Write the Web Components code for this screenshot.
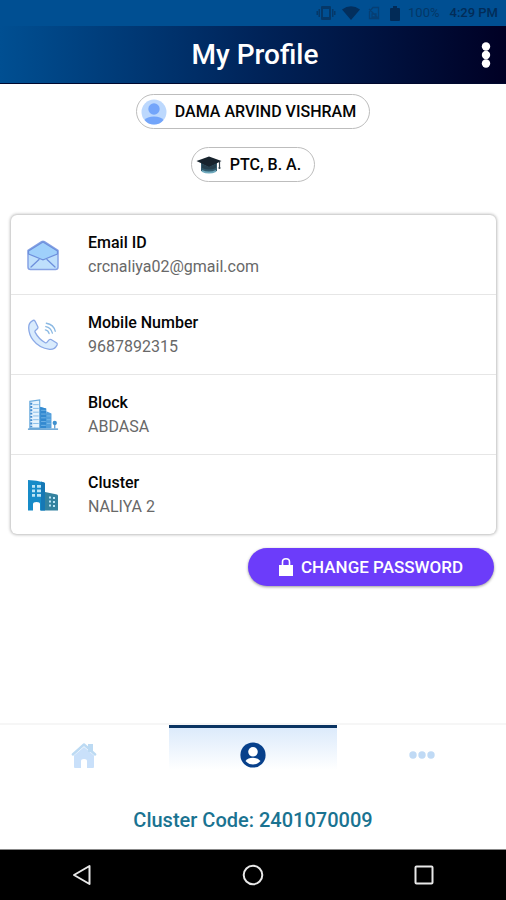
<!DOCTYPE html>
<html lang="en">
<head>
<meta charset="utf-8">
<meta name="viewport" content="width=device-width, initial-scale=1">
<title>My Profile</title>
<style>
  body { margin: 0; background: #fff; color: #050505; font-family: Roboto, "Liberation Sans", sans-serif; }
</style>
</head>
<body>
<profile-app></profile-app>
<script>
const ICONS = {
  vibrate: ['0 0 20 16', '<g fill="#053868"><path fill-rule="evenodd" d="M6 1h8q1 0 1 1v12q0 1-1 1H6q-1 0-1-1V2q0-1 1-1zm1 3v8h6V4z"/><path d="M2.500 4h1.500v8H2.500zM16 4h1.500v8H16zM.5 6H2v4H.5zM18 6h1.500v4H18z"/></g>'],
  wifi: ['0 0 18 14', '<path fill="#032f5d" d="M0 3.500Q9-3 18 3.500L9 14z"/>'],
  nosim: ['0 0 12 14', '<path fill="none" stroke="#063f74" stroke-width="1.300" d="M1.500 5.500 5 1.500h5.500v11h-9zM1 3l10 10M4 8h4v3H4z"/>'],
  battery: ['0 0 10 15', '<path fill="#022b57" d="M3 0h4v2h2q1 0 1 1v11q0 1-1 1H1q-1 0-1-1V3q0-1 1-1h2z"/>'],
  more: ['0 0 10 26', '<g fill="#fff"><circle cx="5" cy="4.500" r="4.200"/><circle cx="5" cy="13" r="4.200"/><circle cx="5" cy="21.500" r="4.200"/></g>'],
  avatar: ['0 0 26 26', '<circle cx="13" cy="13" r="12.500" fill="#bcd8fd"/><circle cx="13" cy="10" r="5.700" fill="#73a5fa"/><path fill="#73a5fa" d="M3.500 21Q6 17.500 13 17.500T22.500 21Q19 25.500 13 25.500T3.500 21z"/>'],
  cap: ['0 0 26 18', '<path fill="#315a6c" d="M5 7h16v8q-8 4-16 0z"/><path fill="#6fa9bd" d="M6 14q7 3 14 0v2q-7 3-14 0z"/><path fill="#17232d" d="M13 .5 25.500 5 13 11 .5 5z"/><path fill="#263f4d" d="M6 8l7 3 7-3v4q-7 3-14 0z"/><path stroke="#34444e" stroke-width="1.200" fill="none" d="M23.500 6v6"/><circle cx="23.500" cy="12" r="1.100" fill="#34444e"/>'],
  mail: ['0 0 32 32', '<path fill="#bedffc" stroke="#86a2e4" stroke-width="1.500" stroke-linejoin="round" d="M1 11.500 15 2.500q1-.7 2 0l14 9V28q0 2.500-2.500 2.500h-25Q1 30.500 1 28z"/><path fill="#9fd0fb" stroke="#6d8fdc" stroke-width="1.300" stroke-linejoin="round" d="M1.500 12 16 3l14.500 9v3L17 20.500q-1 .5-2 0L1.500 15z"/><path fill="none" stroke="#6d8fdc" stroke-width="1.300" stroke-linecap="round" d="M4 28l8-7.500M28 28l-8-7.500"/>'],
  phone: ['0 0 32 34', '<path fill="#d9ebfd" stroke="#8ba9e6" stroke-width="1.400" stroke-linejoin="round" d="M5.500 1.500q1.200-.5 2 .7l3 6q.6 1.200-.5 2.200l-2.300 2q-.6.700 0 1.800 4 7.500 10.700 11 1 .5 1.700-.3l2.300-2.700q1-1 2.200-.4l6 3.700q1 .8.300 2.200-2.700 5-7.900 4.500Q12 31 5.500 22.500 1 16.500.8 9.500.5 4 5.500 1.500z"/><path fill="none" stroke="#8bb9e3" stroke-width="1.400" stroke-linecap="round" d="M18.500 11.500q3 .5 4 4M19 8q5.500 1 7 7M19.500 4.500q8 1.500 9.500 8.500"/>'],
  block: ['0 0 32 34', '<path fill="#55a9df" d="M12 8l7 2v5l5 2v14H12z"/><path fill="#e6f3fd" stroke="#69aadd" stroke-width="1.200" d="M2 2.500 12.500 1v30H2z"/><path fill="none" stroke="#438cd0" stroke-width="2.200" stroke-dasharray="2 1.500" d="M3.500 4v26"/><path fill="none" stroke="#81bae7" stroke-width="1" d="M5.500 6h6M5.500 10h6M5.500 14h6M5.500 18h6M5.500 22h6M5.500 26h6"/><path fill="#3389d0" d="M13 8.500 19.500 10v21H13z"/><path fill="#539fdc" d="M19.500 13 25 15.500V31h-5.500z"/><path stroke="#85c1eb" stroke-width=".8" d="M14 12h5M14 16h5M14 20h5M14 24h5M14 28h5M20 18h4M20 22h4M20 26h4"/><circle cx="28.500" cy="25.500" r="2.300" fill="#3d91cf"/><path stroke="#4690cc" stroke-width="1.200" d="M28.500 25v6M0 32h32"/>'],
  cluster: ['0 0 32 32', '<path fill="#178bc8" d="M1 1q9 0 16 2.500 1 .3 1 1.500v26.500H1z"/><path fill="#1678b5" d="M14 2.500 17 3.500q1 .3 1 1.500v26.500h-4z"/><path fill="#34829f" d="M18 13l12 2.500q1 .3 1 1.500v14.500H18z"/><g fill="#bce4f5"><path d="M5 6h3v2.700H5zM10 6h4v2.700h-4zM5 10.500h3v2.700H5zM10 10.500h4v2.700h-4zM5 15h3v2.700H5zM10 15h4v2.700h-4z"/><path d="M22 17.500h2v2h-2zM26 18h2v2h-2zM22 21.500h2v2h-2zM26 22h2v2h-2zM22 25.500h2v2h-2zM26 26h2v2h-2z"/></g><path fill="#fff" d="M6 32v-7q0-2 3.500-2t3.500 2v7z"/>'],
  lock: ['0 0 14 18', '<path fill="#fff" d="M0 7h14v11H0z"/><path fill="none" stroke="#fff" stroke-width="1.600" d="M3.500 7.500V4q0-3.200 3.500-3.200T10.500 4v3.500"/>'],
  home: ['0 0 26 26', '<path fill="#c9e0fa" d="M3 13.500 13 5l10 8.500V25q0 1-1 1h-6v-7q0-2-3-2t-3 2v7H4q-1 0-1-1z"/><path fill="#bcdaf3" d="M17 2h5v8h-5z"/><path fill="none" stroke="#bcdaf3" stroke-width="2.400" stroke-linecap="round" stroke-linejoin="round" d="M1.800 12.500 13 2.500l11.200 10"/>'],
  user: ['0 0 26 26', '<circle cx="13" cy="13" r="12.600" fill="#07408b"/><circle cx="13" cy="9.800" r="4.800" fill="#fff"/><path fill="#fff" d="M5.500 19Q8 15.800 13 15.800T20.500 19Q17.500 22.500 13 22.500T5.500 19z"/>'],
  dots: ['0 0 26 8', '<g fill="#c0daf5"><circle cx="4" cy="4" r="3.700"/><circle cx="13" cy="4" r="3.700"/><circle cx="22" cy="4" r="3.700"/></g>'],
  back: ['0 0 22 22', '<path fill="none" stroke="#e8e8e8" stroke-width="2" stroke-linejoin="round" d="M18.500 2v18L3 11z"/>'],
  circle: ['0 0 22 22', '<circle cx="11" cy="11" r="9.300" fill="none" stroke="#e8e8e8" stroke-width="2"/>'],
  square: ['0 0 22 22', '<rect x="2.500" y="2.500" width="17" height="17" rx="1" fill="none" stroke="#e8e8e8" stroke-width="2"/>']
};

class Base extends HTMLElement {
  constructor() {
    super();
    this.attachShadow({ mode: 'open' });
  }
  connectedCallback() {
    this.shadowRoot.innerHTML = `<style>*{box-sizing:border-box}button,a{font:inherit;color:inherit;text-decoration:none;-webkit-tap-highlight-color:transparent}button{border:0;background:none;padding:0;cursor:pointer}${this.css()}</style>${this.html()}`;
  }
  css() { return ''; }
  html() { return '<slot></slot>'; }
}

customElements.define('app-icon', class extends Base {
  css() { return ':host{display:block;flex:none;width:26px;height:26px}svg{display:block;width:100%;height:100%}'; }
  html() {
    const [box, art] = ICONS[this.getAttribute('name')];
    return `<svg viewBox="${box}" aria-hidden="true">${art}</svg>`;
  }
});

customElements.define('status-bar', class extends Base {
  css() { return `:host{display:flex;align-items:center;justify-content:flex-end;height:26px;padding:0 8px;background:#004f92;color:#043767;font-size:13px;line-height:16px}
    .vibrate{width:20px;height:16px;margin-right:6px}.wifi{width:18px;height:14px;margin-right:8px}.sim{width:12px;height:14px;margin-right:10px}.battery{width:10px;height:15px;margin-right:8px}
    .time{margin-left:10px;color:#022c58;font-weight:500}`; }
  html() { return `<app-icon class="vibrate" name="vibrate"></app-icon><app-icon class="wifi" name="wifi"></app-icon><app-icon class="sim" name="nosim"></app-icon><app-icon class="battery" name="battery"></app-icon><span>100%</span><span class="time">4:29 PM</span>`; }
});

customElements.define('app-header', class extends Base {
  css() { return `:host{display:grid;grid-template-columns:44px 1fr 40px;align-items:center;height:58px;border-bottom:1px solid #00082e;background:linear-gradient(90deg,#004f92,#00245a 50%,#000024);color:#fff}
    h1{margin:0;text-align:center;font-size:28px;line-height:32px;font-weight:500}
    button{display:flex;align-items:center;justify-content:center;height:48px}.more{width:10px;height:26px}`; }
  html() { return `<span></span><h1><slot></slot></h1><button aria-label="More options"><app-icon class="more" name="more"></app-icon></button>`; }
});

customElements.define('info-chip', class extends Base {
  css() { return `:host{display:flex;align-items:center;gap:8px;height:35px;padding:0 13px 0 4px;border:1px solid #bdbdbd;border-radius:18px;background:#fff;font-size:16px;line-height:20px;font-weight:500}
    .cap{height:18px}`; }
  html() { const n = this.getAttribute('icon'); return `<app-icon class="${n}" name="${n}"></app-icon><slot></slot>`; }
});

customElements.define('info-card', class extends Base {
  css() { return ':host{display:block;border-radius:6px;background:#fff;box-shadow:0 0 3px 1px #bdbdbd}'; }
});

customElements.define('info-row', class extends Base {
  css() { return `:host{display:flex;align-items:center;gap:28px;padding:16px 15px 15px;border-bottom:1px solid #e6e6e6}:host(:last-of-type){border-bottom:0}
    .art{width:34px;height:32px}dl{margin:0}dt{font-size:16px;line-height:24px;font-weight:500}dd{margin:0;font-size:16px;line-height:24px;color:#686868}`; }
  html() { return `<app-icon class="art" name="${this.getAttribute('icon')}"></app-icon><dl><dt>${this.getAttribute('label')}</dt><dd><slot></slot></dd></dl>`; }
});

customElements.define('pill-button', class extends Base {
  css() { return `:host{display:block}button{display:flex;align-items:center;justify-content:center;gap:8px;height:38px;padding:0 28px;border-radius:19px;background:#6c3cfa;color:#fff;font-size:17px;line-height:24px;font-weight:500;min-width:246px;box-shadow:0 1px 3px #0006}.lock{width:14px;height:18px}`; }
  html() { return `<button><app-icon class="lock" name="lock"></app-icon><slot></slot></button>`; }
});

customElements.define('tab-bar', class extends Base {
  css() { return `:host{display:block}nav{display:grid;grid-template-columns:repeat(3,1fr);border-top:2px solid #f6f6f6}
    a{display:flex;align-items:center;justify-content:center;height:59px}a.on{border-top:3px solid #0a3462;padding-bottom:3px;background:linear-gradient(#dceafb,#fff 42px)}.dots{height:8px}`; }
  html() { return `<nav><a href="#home" aria-label="Home"><app-icon name="home"></app-icon></a><a class="on" href="#profile" aria-label="Profile" aria-current="page"><app-icon name="user"></app-icon></a><a href="#more" aria-label="More"><app-icon class="dots" name="dots"></app-icon></a></nav>`; }
});

customElements.define('system-nav', class extends Base {
  css() { return `:host{display:grid;grid-template-columns:repeat(3,1fr);gap:6px;height:51px;border-top:1px solid #888;background:#000}button{display:flex;align-items:center;justify-content:center}app-icon{width:22px;height:22px}`; }
  html() { return `<button aria-label="Back"><app-icon name="back"></app-icon></button><button aria-label="Home screen"><app-icon name="circle"></app-icon></button><button aria-label="Recent apps"><app-icon name="square"></app-icon></button>`; }
});

customElements.define('profile-app', class extends Base {
  css() { return `:host{display:flex;flex-direction:column;min-height:100vh}
    main{flex:1;display:flex;flex-direction:column;padding:10px 10px 0}
    .chips{display:flex;flex-direction:column;align-items:center;gap:18px;margin-bottom:33px}
    info-card{margin-left:1px}
    pill-button{align-self:flex-end;margin:14px 2px 24px 0}
    .code{margin:0;padding:24px 0 17px;text-align:center;font-size:20px;line-height:24px;font-weight:500;color:#1a7391}`; }
  html() { return `<status-bar></status-bar><app-header>My Profile</app-header>
    <main><div class="chips"><info-chip icon="avatar">DAMA ARVIND VISHRAM</info-chip><info-chip icon="cap">PTC, B. A.</info-chip></div>
    <info-card><info-row icon="mail" label="Email ID">crcnaliya02@gmail.com</info-row><info-row icon="phone" label="Mobile Number">9687892315</info-row><info-row icon="block" label="Block">ABDASA</info-row><info-row icon="cluster" label="Cluster">NALIYA 2</info-row></info-card>
    <pill-button>CHANGE PASSWORD</pill-button></main>
    <tab-bar></tab-bar><p class="code">Cluster Code: 2401070009</p><system-nav></system-nav>`; }
});
</script>
</body>
</html>
